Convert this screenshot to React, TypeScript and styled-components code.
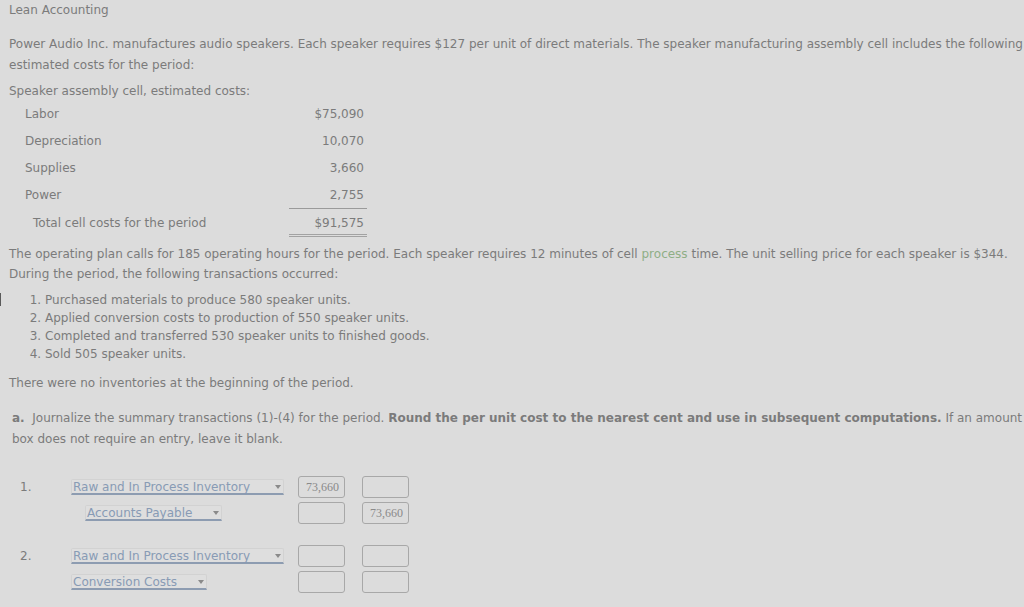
import React from 'react';
import styled, { createGlobalStyle } from 'styled-components';

const GlobalStyle = createGlobalStyle`
  html, body {
    margin: 0;
    padding: 0;
    background: #dcdcdc;
  }
  body {
    font-family: "DejaVu Sans", Verdana, sans-serif;
    font-size: 12px;
    color: #7b7b7b;
  }
`;

const Page = styled.div`
  position: relative;
  padding: 2px 9px 0 9px;
  width: 1024px;
  height: 607px;
  box-sizing: border-box;
  overflow: hidden;
`;

const Title = styled.div`
  line-height: 16px;
  margin-bottom: 16px;
`;

const Para = styled.p<{ $mt?: number }>`
  margin: ${(p) => p.$mt ?? 0}px 0 0 0;
  line-height: 20.5px;
  white-space: nowrap;
`;

const Green = styled.span`
  color: #8fae86;
`;

const CostTable = styled.div`
  display: grid;
  grid-template-columns: 280px 78px;
  margin-top: 1px;
`;

type RowKind = 'item' | 'sub' | 'total';

const rowHeight = (k: RowKind) => (k === 'sub' ? 25 : k === 'total' ? 28 : 27);
const rowPad = (k: RowKind) => (k === 'total' ? 6 : 3);

const Label = styled.div<{ $indent: number; $kind: RowKind }>`
  padding-left: ${(p) => p.$indent}px;
  height: ${(p) => rowHeight(p.$kind)}px;
  padding-top: ${(p) => rowPad(p.$kind)}px;
  line-height: 16px;
  box-sizing: border-box;
`;

const Amount = styled.div<{ $kind: RowKind }>`
  text-align: right;
  padding-right: 3px;
  line-height: 16px;
  box-sizing: border-box;
  height: ${(p) => rowHeight(p.$kind)}px;
  padding-top: ${(p) => rowPad(p.$kind)}px;
  border-bottom: ${(p) =>
    p.$kind === 'sub' ? '1px solid #9a9a9a' : p.$kind === 'total' ? '3px double #a2a2a2' : 'none'};
`;

const List = styled.ol`
  margin: 6px 0 0 0;
  padding-left: 36px;
  line-height: 18px;
  position: relative;
`;

const EdgeMark = styled.span`
  position: absolute;
  left: -9px;
  top: 2px;
  width: 1px;
  height: 13px;
  background: #5a5a5a;
`;

const Bold = styled.b`
  font-weight: bold;
`;

const Question = styled.div`
  margin-top: 15px;
  padding-left: 3px;
`;

const Entries = styled.div`
  margin-top: 27px;
  display: flex;
  flex-direction: column;
  gap: 21px;
`;

const Entry = styled.div`
  display: grid;
  grid-template-columns: 62px 227px 64px 47px;
  row-gap: 4px;
  align-items: center;
`;

const Num = styled.div`
  padding-left: 11px;
  line-height: 16px;
`;

const SelectBox = styled.div<{ $indent?: number; $width: number }>`
  margin-left: ${(p) => p.$indent ?? 0}px;
  width: ${(p) => p.$width}px;
  height: 16px;
  box-sizing: border-box;
  border: 1px solid #d2d2d2;
  border-bottom: 2px solid #8d9cb1;
  border-radius: 2px 2px 0 0;
  background: #dedede;
  color: #889bb5;
  display: flex;
  align-items: center;
  justify-content: space-between;
  padding: 0 2px 0 1px;
  font-size: 12px;
  line-height: 14px;
`;

const Caret = styled.span`
  width: 0;
  height: 0;
  border-left: 3.5px solid transparent;
  border-right: 3.5px solid transparent;
  border-top: 4px solid #8a8a8a;
`;

const Amt = styled.div`
  width: 47px;
  height: 22px;
  box-sizing: border-box;
  border: 1px solid #a8a8a8;
  border-radius: 3px;
  background: #dcdcdc;
  font-family: "Liberation Serif", "Times New Roman", serif;
  font-size: 12px;
  color: #8a8a8a;
  text-align: right;
  padding: 0 5px;
  line-height: 20px;
`;

const Blank = styled.div``;

const Select = ({ text, width, indent }: { text: string; width: number; indent?: number }) => (
  <SelectBox $width={width} $indent={indent}>
    <span>{text}</span>
    <Caret />
  </SelectBox>
);

const costs: { label: string; amount: string; kind: RowKind; indent: number }[] = [
  { label: 'Labor', amount: '$75,090', kind: 'item', indent: 16 },
  { label: 'Depreciation', amount: '10,070', kind: 'item', indent: 16 },
  { label: 'Supplies', amount: '3,660', kind: 'item', indent: 16 },
  { label: 'Power', amount: '2,755', kind: 'sub', indent: 16 },
  { label: 'Total cell costs for the period', amount: '$91,575', kind: 'total', indent: 24 },
];

const App = () => {
  return (
    <Page>
      <GlobalStyle />
      <Title>Lean Accounting</Title>
      <Para>
        Power Audio Inc. manufactures audio speakers. Each speaker requires $127 per unit of direct materials. The
        speaker manufacturing assembly cell includes the following
        <br />
        estimated costs for the period:
      </Para>
      <Para $mt={6}>Speaker assembly cell, estimated costs:</Para>
      <CostTable>
        {costs.map((c) => (
          <React.Fragment key={c.label}>
            <Label $indent={c.indent} $kind={c.kind}>
              {c.label}
            </Label>
            <Amount $kind={c.kind}>{c.amount}</Amount>
          </React.Fragment>
        ))}
      </CostTable>
      <Para $mt={7}>
        The operating plan calls for 185 operating hours for the period. Each speaker requires 12 minutes of cell{' '}
        <Green>process</Green> time. The unit selling price for each speaker is $344.
        <br />
        During the period, the following transactions occurred:
      </Para>
      <List>
        <EdgeMark />
        <li>Purchased materials to produce 580 speaker units.</li>
        <li>Applied conversion costs to production of 550 speaker units.</li>
        <li>Completed and transferred 530 speaker units to finished goods.</li>
        <li>Sold 505 speaker units.</li>
      </List>
      <Para $mt={10}>There were no inventories at the beginning of the period.</Para>
      <Question>
        <Para>
          <Bold>a.</Bold>&nbsp; Journalize the summary transactions (1)-(4) for the period.{' '}
          <Bold>Round the per unit cost to the nearest cent and use in subsequent computations.</Bold> If an amount
          <br />
          box does not require an entry, leave it blank.
        </Para>
      </Question>
      <Entries>
        <Entry>
          <Num>1.</Num>
          <Select text="Raw and In Process Inventory" width={213} />
          <Amt>73,660</Amt>
          <Amt />
          <Blank />
          <Select text="Accounts Payable" width={137} indent={14} />
          <Amt />
          <Amt>73,660</Amt>
        </Entry>
        <Entry>
          <Num>2.</Num>
          <Select text="Raw and In Process Inventory" width={213} />
          <Amt />
          <Amt />
          <Blank />
          <Select text="Conversion Costs" width={136} />
          <Amt />
          <Amt />
        </Entry>
      </Entries>
    </Page>
  );
};

export default App;
